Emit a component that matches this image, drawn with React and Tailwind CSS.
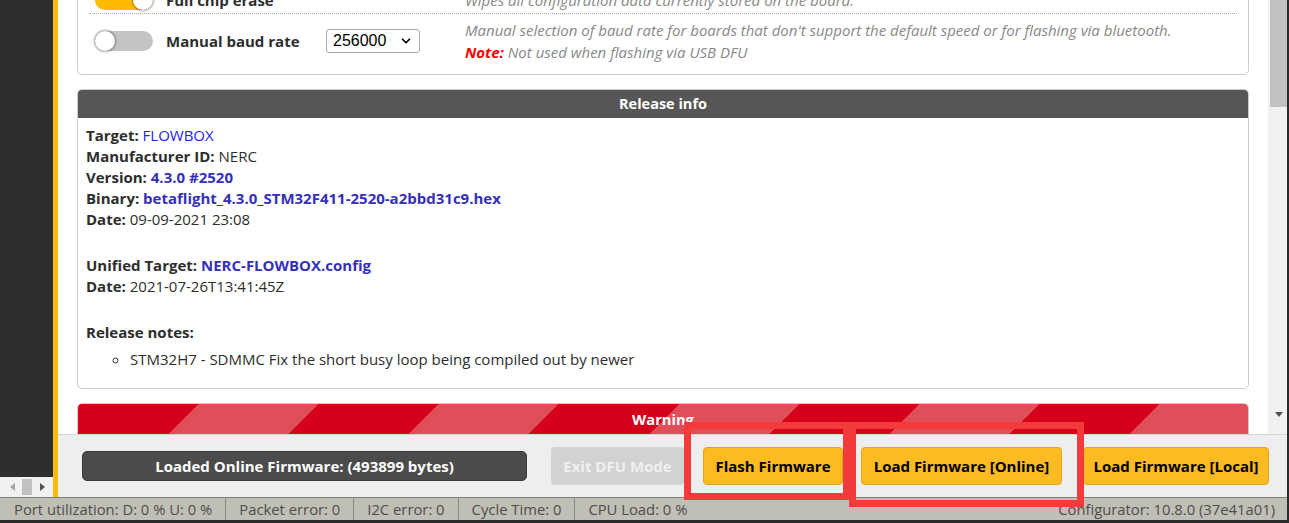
import React from "react";
import { ChevronDown } from "lucide-react";

const Toggle = ({ on }) => (
  <div
    className={`flex w-[58px] h-[20px] rounded-full ${
      on ? "bg-[#ffbb00] justify-end" : "bg-[#c4c4c4] justify-start"
    }`}
  >
    <div className="w-[20px] h-[20px] rounded-full bg-white shadow-[0_0_2px_1px_rgba(0,0,0,0.35)]" />
  </div>
);

const OptionRow = ({ on, label, select, children, className }) => (
  <div className={`flex items-center pl-[6px] ${className}`}>
    <div className="w-[71px] shrink-0">
      <Toggle on={on} />
    </div>
    <div className="w-[160px] shrink-0 font-bold text-[#2d2d2d]">{label}</div>
    <div className="w-[139px] shrink-0">
      {select && (
        <div className="w-[94px] h-[24px] border border-[#a9a9a9] rounded-[3px] bg-white flex items-center justify-between pl-[6px] pr-[6px] font-['Liberation_Sans',sans-serif] text-[16px] text-black">
          256000
          <ChevronDown size={14} strokeWidth={3} />
        </div>
      )}
    </div>
    <div className="flex-1 italic text-[15px] leading-[22px] text-[#888]">{children}</div>
  </div>
);

const StatusItem = ({ children, last }) => (
  <div className={`px-[13px] h-full flex items-center ${last ? "" : "border-r border-[#8a8a84]"}`}>
    {children}
  </div>
);

const Triangle = ({ dir, color }) => {
  const pts = {
    left: "5,0 5,8 0,4",
    right: "0,0 0,8 5,4",
    down: "0,0 8,0 4,5",
  };
  const w = dir === "down" ? 8 : 5;
  const h = dir === "down" ? 5 : 8;
  return (
    <svg width={w} height={h} viewBox={`0 0 ${w} ${h}`}>
      <polygon points={pts[dir]} fill={color} />
    </svg>
  );
};

export default function App() {
  return (
    <div className="relative w-[1289px] h-[523px] flex flex-col overflow-hidden border-r-2 border-b-[3px] border-[#2b2b2b] font-['Open_Sans',sans-serif] text-[15px] text-[#333]">
      <div className="flex flex-1 min-h-0">
        {/* sidebar */}
        <div className="w-[53px] shrink-0 bg-[#2e2e2e] flex flex-col justify-end">
          <div className="h-[20px] bg-[#f1f1f1] flex items-center">
            <div className="w-[22px] flex justify-center pl-[2px]">
              <Triangle dir="left" color="#a3a3a3" />
            </div>
            <div className="w-[10px] h-[16px] bg-[#c1c1c1]" />
            <div className="flex-1 flex justify-center">
              <Triangle dir="right" color="#505050" />
            </div>
          </div>
        </div>
        <div className="w-[5px] shrink-0 bg-[#ffbb00]" />

        <div className="flex-1 flex flex-col min-w-0">
          <div className="flex-1 flex min-h-0">
            {/* content */}
            <div className="flex-1 bg-white overflow-hidden px-[19px]">
              <div className="-mt-[14px] border border-[#ccc] rounded-[5px] px-[11px]">
                <OptionRow
                  on
                  label="Full chip erase"
                  className="h-[27px] border-b border-dotted border-[#aaa]"
                >
                  Wipes all configuration data currently stored on the board.
                </OptionRow>
                <OptionRow label="Manual baud rate" select className="pt-[5px] pb-[11px]">
                  <div>
                    Manual selection of baud rate for boards that don't support the default speed or for
                    flashing via bluetooth.
                  </div>
                  <div>
                    <span className="font-bold text-[#ff0000]">Note:</span> Not used when flashing via USB DFU
                  </div>
                </OptionRow>
              </div>

              <div className="mt-[14px] border border-[#ccc] rounded-[5px] overflow-hidden">
                <div className="h-[28px] bg-[#565656] text-white text-[14.5px] font-bold flex items-center justify-center">
                  Release info
                </div>
                <div className="px-[8px] pt-[7px] pb-[18px] leading-[21px] text-[#2d2d2d]">
                  <div>
                    <div>
                      <b>Target:</b> <span className="text-[#2323e6]">FLOWBOX</span>
                    </div>
                    <div>
                      <b>Manufacturer ID:</b> NERC
                    </div>
                    <div>
                      <b>Version:</b> <b className="text-[#3530b8]">4.3.0 #2520</b>
                    </div>
                    <div>
                      <b>Binary:</b>{" "}
                      <b className="text-[#3530b8]">betaflight_4.3.0_STM32F411-2520-a2bbd31c9.hex</b>
                    </div>
                    <div>
                      <b>Date:</b> 09-09-2021 23:08
                    </div>
                  </div>
                  <div className="mt-[25px]">
                    <div>
                      <b>Unified Target:</b> <b className="text-[#3530b8]">NERC-FLOWBOX.config</b>
                    </div>
                    <div>
                      <b>Date:</b> 2021-07-26T13:41:45Z
                    </div>
                  </div>
                  <div className="mt-[25px] font-bold">Release notes:</div>
                  <ul className="mt-[6px] pl-[44px] list-[circle]">
                    <li>STM32H7 - SDMMC Fix the short busy loop being compiled out by newer</li>
                  </ul>
                </div>
              </div>

              <div className="mt-[14px] border border-[#ccc] rounded-[5px] overflow-hidden">
                <div className="h-[30px] bg-[image:repeating-linear-gradient(135deg,#d50019_0px,#d50019_85px,#e04e5a_85px,#e04e5a_170px)] text-white text-[14.7px] font-bold flex items-center justify-center">
                  Warning
                </div>
                <div className="h-[60px]" />
              </div>
            </div>

            {/* vertical scrollbar */}
            <div className="w-[19px] shrink-0 bg-[#f1f1f1] flex flex-col">
              <div className="ml-[2px] w-[17px] h-[107px] bg-[#c1c1c1]" />
              <div className="flex-1" />
              <div className="h-[22px] flex justify-center pl-[2px]">
                <Triangle dir="down" color="#505050" />
              </div>
            </div>
          </div>

          {/* toolbar */}
          <div className="h-[63px] shrink-0 bg-[#eeeeee] border-t border-[#d4d4d4] flex items-center pl-[24px] font-bold">
            <div className="w-[445px] h-[30px] rounded-[5px] bg-[#4b4b4b] border border-[#3a3a3a] text-white flex items-center justify-center">
              Loaded Online Firmware: (493899 bytes)
            </div>
            <div className="ml-[24px] w-[133px] h-[38px] rounded-[4px] bg-[#d2d2d2] text-[#f0f0f0] flex items-center justify-center">
              Exit DFU Mode
            </div>
            <div className="ml-[19px] w-[140px] h-[38px] rounded-[4px] bg-[#fcbb22] border border-[#e0a51a] text-black flex items-center justify-center">
              Flash Firmware
            </div>
            <div className="ml-[18px] w-[201px] h-[38px] rounded-[4px] bg-[#fcbb22] border border-[#e0a51a] text-black flex items-center justify-center">
              Load Firmware [Online]
            </div>
            <div className="ml-[21px] w-[186px] h-[38px] rounded-[4px] bg-[#fcbb22] border border-[#e0a51a] text-black flex items-center justify-center">
              Load Firmware [Local]
            </div>
          </div>
        </div>
      </div>

      {/* status bar */}
      <div className="h-[23px] shrink-0 bg-[#c0bfb6] border-t border-[#7d7d79] flex items-center text-[14.8px] text-[#4d4d4d] pl-[1px]">
        <StatusItem>Port utilization: D: 0 % U: 0 %</StatusItem>
        <StatusItem>Packet error: 0</StatusItem>
        <StatusItem>I2C error: 0</StatusItem>
        <StatusItem>Cycle Time: 0</StatusItem>
        <StatusItem last>CPU Load: 0 %</StatusItem>
        <div className="ml-auto pr-[12px]">Configurator: 10.8.0 (37e41a01)</div>
      </div>

      {/* annotation boxes */}
      <div className="absolute left-[684px] top-[422px] w-[166px] h-[78px] border-[7px] border-[#f43b3b]" />
      <div className="absolute left-[849px] top-[422px] w-[235px] h-[85px] border-[7px] border-[#f43b3b]" />
    </div>
  );
}
